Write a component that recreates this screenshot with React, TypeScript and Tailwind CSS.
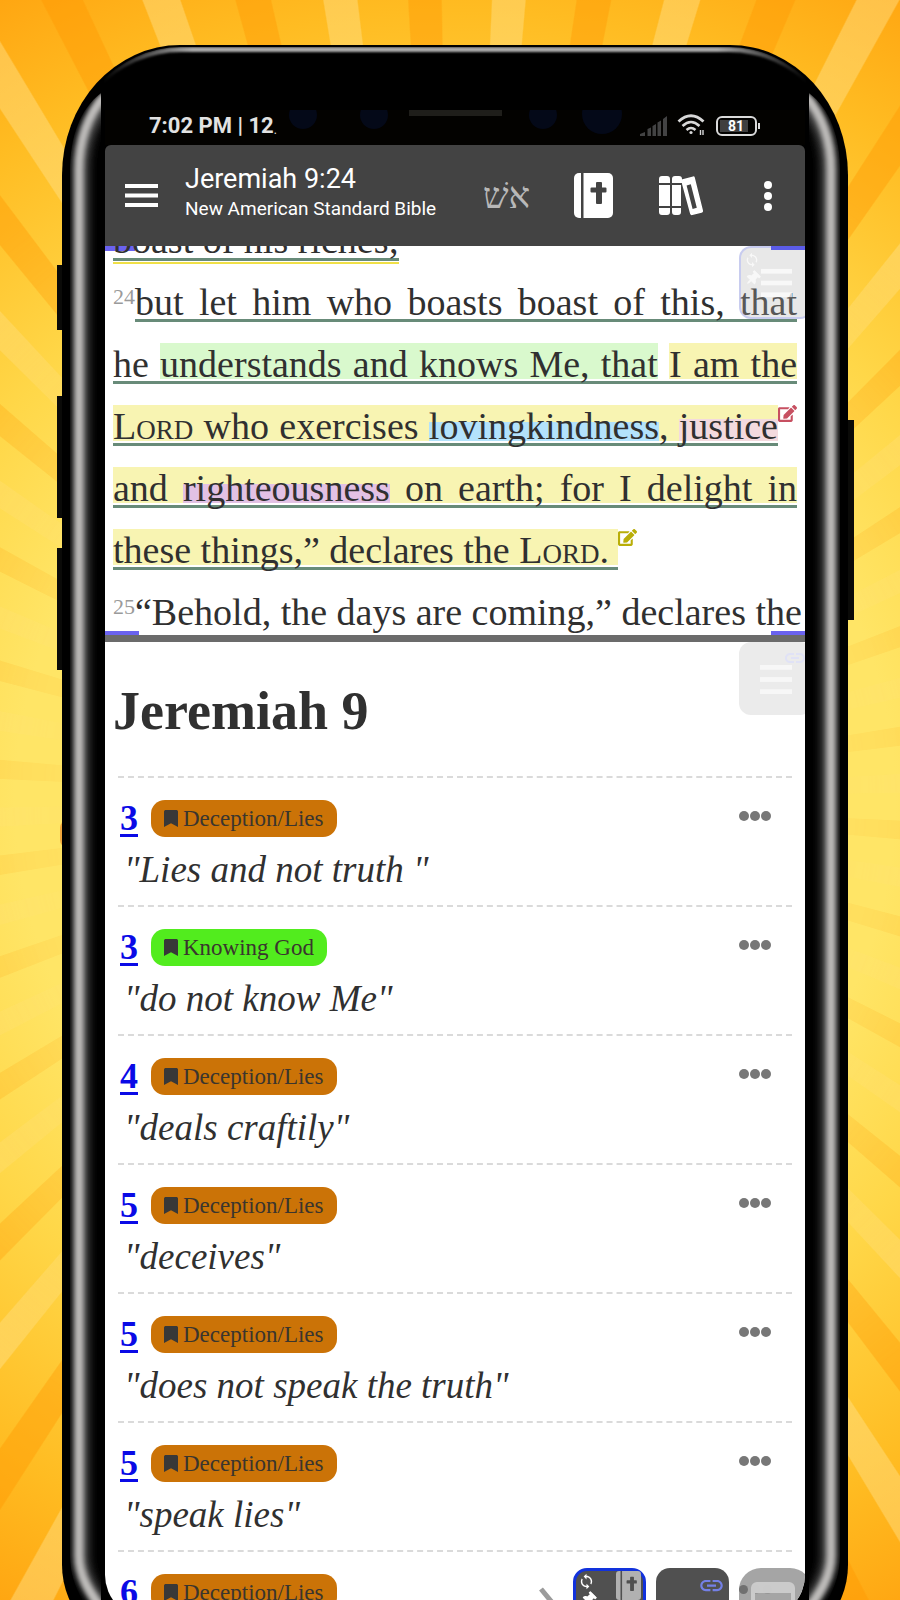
import React from "react";
import { FaBookmark, FaEdit, FaThumbtack } from "react-icons/fa";
import { MdLink, MdSync } from "react-icons/md";

const hl = {
  green:
    "bg-[linear-gradient(to_top,transparent_6px,#d9f9cd_6px)]",
  yellow:
    "bg-[linear-gradient(to_top,transparent_6px,#f8f4b2_6px)]",
  blue:
    "bg-[linear-gradient(to_top,transparent_6px,#b3e2fb_6px,#b3e2fb_25px,transparent_25px)]",
  purple:
    "bg-[linear-gradient(to_top,transparent_6px,#e2c1e4_6px,#e2c1e4_25px,transparent_25px)]",
  pink:
    "bg-[linear-gradient(to_top,transparent_6px,#f3dade_6px,#f3dade_28px,transparent_28px)]",
};

function Mark({ tone, children }: { tone: keyof typeof hl; children: React.ReactNode }) {
  return <mark className={`bg-transparent text-inherit ${hl[tone]}`}>{children}</mark>;
}

function Underlined({ children }: { children: React.ReactNode }) {
  return (
    <span className="bg-[linear-gradient(to_top,transparent_1px,#688b79_1px,#688b79_4px,transparent_4px)]">
      {children}
    </span>
  );
}

function Line({ justify = true, children }: { justify?: boolean; children: React.ReactNode }) {
  return (
    <span className={justify ? "block whitespace-nowrap [text-align-last:justify]" : "block whitespace-nowrap"}>
      {children}
    </span>
  );
}

function VerseNumber({ n }: { n: number }) {
  return <sup className="top-0 align-[11px] text-[22px] leading-none text-[#9a9a9a]">{n}</sup>;
}

function Lord() {
  return <span className="[font-variant:small-caps]">Lord</span>;
}

function NoteIcon({ tone }: { tone: "red" | "olive" }) {
  return (
    <FaEdit
      className={
        tone === "red"
          ? "inline-block size-[19px] align-[16px] text-[#c75061]"
          : "inline-block size-[19px] align-[16px] text-[#b9ae08]"
      }
    />
  );
}

function Bars({ className }: { className: string }) {
  return (
    <svg viewBox="0 0 33 30" className={className} fill="currentColor" aria-hidden="true">
      <rect width="33" height="5" y="0" />
      <rect width="33" height="5" y="12.5" />
      <rect width="33" height="5" y="25" />
    </svg>
  );
}

function BibleIcon({ className, cross }: { className: string; cross: string }) {
  return (
    <svg viewBox="0 0 39 45" className={className} fill="currentColor" aria-hidden="true">
      <path d="M5 0h2v45H5a5 5 0 0 1-5-5V5a5 5 0 0 1 5-5z" />
      <path d="M9.5 0H34a5 5 0 0 1 5 5v35a5 5 0 0 1-5 5H9.5z" />
      <path
        fill={cross}
        d="M23 9h4a1 1 0 0 1 1 1v4.500h3.500a1 1 0 0 1 1 1v3a1 1 0 0 1-1 1H28V30a1 1 0 0 1-1 1h-4a1 1 0 0 1-1-1V19.500h-4.500a1 1 0 0 1-1-1v-3a1 1 0 0 1 1-1H22V10a1 1 0 0 1 1-1z"
      />
    </svg>
  );
}

function BooksIcon() {
  return (
    <svg viewBox="0 0 44 40" className="h-10 w-11" fill="currentColor" aria-hidden="true">
      <path d="M0 7V3a3 3 0 0 1 3-3h5a3 3 0 0 1 3 3v4zM0 9h11v21H0zM0 32h11v4a3 3 0 0 1-3 3H3a3 3 0 0 1-3-3z" />
      <path d="M13 7V3a3 3 0 0 1 3-3h4a3 3 0 0 1 3 3v4zM13 9h9v21h-9zM13 32h9v4a3 3 0 0 1-3 3h-3a3 3 0 0 1-3-3z" />
      <path
        fillRule="evenodd"
        d="M22.500 3.600 34 .4a1.500 1.500 0 0 1 1.800 1L44 34.600a2 2 0 0 1-1.400 2.200l-9.200 2.300a2 2 0 0 1-2.300-1.400L23 8zM27.600 9.500l6 23.400 4.200-1.200L31.800 8.200z"
      />
    </svg>
  );
}

function Wifi() {
  return (
    <svg viewBox="0 0 29 23" className="h-[23px] w-[29px]" fill="none" stroke="#d8d8d8" aria-hidden="true">
      <path d="M1.500 7.500Q14 -4 26.500 7.500" strokeWidth="2.800" />
      <path d="M5.500 12Q14 4 22.500 12" strokeWidth="2.600" />
      <path d="M9.500 16Q14 12 18.500 16" strokeWidth="2.500" />
      <circle cx="14" cy="18.500" r="1.600" fill="#d8d8d8" stroke="none" />
      <path d="M23.500 16v5M26 16v5" strokeWidth="1.400" />
    </svg>
  );
}

function Signal() {
  return (
    <svg viewBox="0 0 27 20" className="h-5 w-[27px]" fill="#434343" aria-hidden="true">
      <path d="M0 20v-2l5-2v4zM7.500 20v-7l3.500-1.500V20zM12.500 20V10l3.500-2v12zM17.500 20V6.500L21 4.500V20zM23 20V3l4-3v20z" />
    </svg>
  );
}

function EdgeShine({ id, className }: { id: string; className: string }) {
  return (
    <svg viewBox="0 0 43 1606" width="43" height="1606" className={className} aria-hidden="true">
      <defs>
        <filter id={`${id}-wide`} x="-100%" width="300%">
          <feGaussianBlur stdDeviation="4 1" />
        </filter>
        <filter id={`${id}-core`} x="-100%" width="300%">
          <feGaussianBlur stdDeviation="2.600 1" />
        </filter>
        <clipPath id={`${id}-clip`}>
          <path d="M39 48C18 64 8 92 8 125V1510C8 1540 22 1560 39 1580z" />
        </clipPath>
      </defs>
      <g clipPath={`url(#${id}-clip)`} fill="none">
        <path
          d="M44 56C28 74 19 96 19 125V1510C19 1530 28 1545 44 1566"
          stroke="#4a4948"
          strokeWidth="16"
          filter={`url(#${id}-wide)`}
        />
        <path
          d="M43 50C26 70 17 96 17 125V1510C17 1530 26 1546 43 1568"
          stroke="#bfbdbb"
          strokeWidth="9"
          filter={`url(#${id}-core)`}
        />
      </g>
    </svg>
  );
}

type Entry = { verse: number; label: string; color: "orange" | "green"; quote: string };

const entries: Entry[] = [
  { verse: 3, label: "Deception/Lies", color: "orange", quote: "Lies and not truth " },
  { verse: 3, label: "Knowing God", color: "green", quote: "do not know Me" },
  { verse: 4, label: "Deception/Lies", color: "orange", quote: "deals craftily" },
  { verse: 5, label: "Deception/Lies", color: "orange", quote: "deceives" },
  { verse: 5, label: "Deception/Lies", color: "orange", quote: "does not speak the truth" },
  { verse: 5, label: "Deception/Lies", color: "orange", quote: "speak lies" },
  { verse: 6, label: "Deception/Lies", color: "orange", quote: "" },
];

function EntryRow({ entry }: { entry: Entry }) {
  return (
    <li className="h-[129px] border-t-2 border-dashed border-[#dadada] pt-[21px]">
      <div className="flex items-center pl-[2px] pr-[21px]">
        <a
          href="#verse"
          className="text-[36px] leading-[38px] font-bold text-[#0a0ae6] underline decoration-[3px] underline-offset-4"
        >
          {entry.verse}
        </a>
        <span
          className={`ml-[13px] flex h-[37px] items-center gap-[5px] rounded-[14px] px-[13px] text-[23px] leading-[37px] text-[#3a352e] ${
            entry.color === "orange" ? "bg-[#cb7307]" : "bg-[#52ec1e]"
          }`}
        >
          <FaBookmark className="h-[17px] w-[14px] text-[#383838]" preserveAspectRatio="none" />
          {entry.label}
        </span>
        <button type="button" aria-label="More" className="mb-1 ml-auto flex gap-px">
          <span className="size-[10px] rounded-full bg-[#777]" />
          <span className="size-[10px] rounded-full bg-[#777]" />
          <span className="size-[10px] rounded-full bg-[#777]" />
        </button>
      </div>
      <p className="mt-[12px] pl-[6px] text-[37px] leading-[42px] whitespace-pre italic">
        {entry.quote && `"${entry.quote}"`}
      </p>
    </li>
  );
}

function StatusBar() {
  return (
    <div className="relative flex h-[35px] items-center overflow-hidden bg-[#030200] pr-[45px] pb-1 pl-[44px] text-[#e2e2e2]">
      <span className="absolute top-[-9px] left-[184px] size-7 rounded-full bg-[#040918]" />
      <span className="absolute top-[-9px] left-[255px] size-7 rounded-full bg-[#040918]" />
      <span className="absolute top-[-9px] left-[424px] size-7 rounded-full bg-[#040918]" />
      <span className="absolute top-[-16px] left-[477px] size-10 rounded-full bg-[#040918]" />
      <span className="absolute top-0 left-[304px] h-[6px] w-[93px] bg-[#1f1e1a]" />
      <span className="text-[22px] leading-[31px] font-bold">7:02 PM | 12</span>
      <span className="pt-2 text-[12px]">.</span>
      <span className="ml-auto flex items-center gap-[10px]">
        <Signal />
        <Wifi />
        <span className="flex items-center gap-px">
          <span className="flex h-5 w-[41px] items-center rounded-md border-2 border-[#dadada] p-[2px]">
            <span className="flex h-full w-[28px] items-center justify-center bg-[#3f3f3f] pl-[4px] text-[14px] leading-none font-bold text-white">
              81
            </span>
          </span>
          <span className="h-[6px] w-[2px] bg-[#dadada]" />
        </span>
      </span>
    </div>
  );
}

function Header() {
  return (
    <header className="flex h-[101px] items-center rounded-t-md bg-[#434343] pr-[33px] pl-[20px] text-white">
      <button type="button" aria-label="Menu">
        <svg viewBox="0 0 33 23" className="h-[23px] w-[33px]" fill="currentColor" aria-hidden="true">
          <path d="M0 0h33v4H0zM0 9.500h33v4H0zM0 19h33v4H0z" />
        </svg>
      </button>
      <div className="mb-[6px] ml-[27px]">
        <h1 className="text-[27px] leading-[32px]">Jeremiah 9:24</h1>
        <p className="text-[19px] leading-[28px]">New American Standard Bible</p>
      </div>
      <div className="ml-auto flex items-center">
        <button
          type="button"
          aria-label="Original language"
          dir="rtl"
          className="font-['Liberation_Serif',serif] text-[36px] leading-[44px] text-[#b8b8b8]"
        >
          אשׁ
        </button>
        <button type="button" aria-label="Bible" className="ml-[44px]">
          <BibleIcon className="h-[45px] w-[39px]" cross="#434343" />
        </button>
        <button type="button" aria-label="Library" className="ml-[46px]">
          <BooksIcon />
        </button>
        <button type="button" aria-label="More options" className="ml-[61px]">
          <svg viewBox="0 0 8 30" className="h-[30px] w-2" fill="currentColor" aria-hidden="true">
            <circle cx="4" cy="4" r="4" />
            <circle cx="4" cy="15" r="4" />
            <circle cx="4" cy="26" r="4" />
          </svg>
        </button>
      </div>
    </header>
  );
}

function BiblePane() {
  return (
    <section className="relative h-[389px] shrink-0 overflow-hidden px-2 font-['Liberation_Serif',serif] text-[38px] leading-[62px] text-[#303030]">
      <span className="absolute top-0 left-0 h-[5px] w-[30px] bg-[#6a62f0]" />
      <span className="absolute bottom-0 left-0 h-1 w-[34px] bg-[#6a62f0]" />
      <p className="relative mt-[-37px]">
        <Line justify={false}>
          <span className="border-b-2 border-[#f0e047] pb-px bg-[linear-gradient(to_top,transparent_1px,#688b79_1px,#688b79_4px,transparent_4px)]">
            boast of his riches;
          </span>
        </Line>
        <Line>
          <VerseNumber n={24} />
          <Underlined>but let him who boasts boast of this, that</Underlined>
        </Line>
        <Line>
          <Underlined>
            he <Mark tone="green">understands and knows Me, that</Mark> <Mark tone="yellow">I am the</Mark>
          </Underlined>
        </Line>
        <Line>
          <Underlined>
            <Mark tone="yellow">
              <Lord /> who exercises <Mark tone="blue">lovingkindness</Mark>, <Mark tone="pink">justice</Mark>
            </Mark>
          </Underlined>
          <NoteIcon tone="red" />
        </Line>
        <Line>
          <Underlined>
            <Mark tone="yellow">
              and <Mark tone="purple">righteousness</Mark> on earth; for I delight in
            </Mark>
          </Underlined>
        </Line>
        <Line justify={false}>
          <Underlined>
            <Mark tone="yellow">
              these things,” declares the <Lord />.{" "}
            </Mark>
          </Underlined>
          <NoteIcon tone="olive" />
        </Line>
        <Line>
          <VerseNumber n={25} />
          “Behold, the days are coming,” declares the
        </Line>
      </p>
      <button
        type="button"
        aria-label="Window menu"
        className="absolute top-0 right-[-7px] h-[73px] w-[73px] rounded-xl border-2 border-[#7d8cff]/30 bg-[#b4b4b4]/30 text-white/70"
      >
        <MdSync className="absolute top-[4px] left-[3px] size-4" />
        <FaThumbtack className="absolute top-[23px] left-[4px] size-[15px] rotate-45" />
        <Bars className="absolute top-[20px] left-[20px] h-[30px] w-[31px]" />
      </button>
      <span className="absolute top-0 right-0 h-1 w-[34px] bg-[#5b5ce8]" />
      <span className="absolute right-0 bottom-0 h-1 w-[34px] bg-[#6a62f0]" />
    </section>
  );
}

function NotesPane() {
  return (
    <section className="relative flex-1 overflow-hidden font-['Liberation_Serif',serif] text-[#303030]">
      <h2 className="px-2 pt-[39px] pb-[35px] text-[54px] leading-[60px] font-bold">Jeremiah 9</h2>
      <ul className="mr-[13px] ml-[13px]">
        {entries.map((entry, i) => (
          <EntryRow key={i} entry={entry} />
        ))}
      </ul>
      <button
        type="button"
        aria-label="Window menu"
        className="absolute top-0 right-[-7px] h-[73px] w-[73px] rounded-xl bg-[#ebebeb] text-[#f7f7f7]"
      >
        <MdLink className="absolute top-[4px] left-[44px] size-[24px] text-[#e0e2f6]" />
        <Bars className="absolute top-[22px] left-[21px] h-[31px] w-[32px]" />
      </button>
    </section>
  );
}

function BottomTools() {
  return (
    <div className="absolute right-[-7px] bottom-[-23px] flex items-start gap-[10px]">
      <svg viewBox="0 0 28 52" className="mt-[18px] mr-[-3px] h-[52px] w-7" aria-hidden="true">
        <path d="M3 3 22 26 3 49" fill="none" stroke="#9b9b9b" strokeWidth="5" />
      </svg>
      <button
        type="button"
        aria-label="Bible window"
        className="relative h-[73px] w-[73px] rounded-[14px] border-[3px] border-[#1232dc] bg-[#505050] text-white"
      >
        <MdSync className="absolute top-[2px] left-[2px] size-[17px]" />
        <FaThumbtack className="absolute top-[21px] left-[5px] size-[15px] rotate-45" />
        <BibleIcon className="absolute top-0 right-[2px] h-[29px] w-[25px] text-[#b1b1b1]" cross="#505050" />
      </button>
      <button
        type="button"
        aria-label="Linked window"
        className="relative h-[73px] w-[73px] rounded-[14px] bg-[#505050] text-[#7480e6]"
      >
        <MdLink className="absolute top-[4px] left-[42px] size-[27px]" />
      </button>
      <button
        type="button"
        aria-label="Restore window"
        className="relative h-[73px] w-[73px] rounded-[22px] bg-[#a5a5a5]"
      >
        <span className="absolute top-[17px] left-0 flex gap-[3px]">
          <span className="size-[9px] rounded-full bg-[#707070]" />
          <span className="size-[9px] rounded-full bg-[#979797]" />
          <span className="size-[9px] rounded-full bg-[#979797]" />
        </span>
        <span className="absolute top-[14px] left-[12px] h-[44px] w-[44px] rounded-md border-x-4 border-t-[11px] border-b-4 border-[#cfcfcf] opacity-90" />
      </button>
    </div>
  );
}

export default function App() {
  return (
    <div className="relative h-screen overflow-hidden bg-[radial-gradient(circle_at_455px_50%,#ffe566_440px,#ffd748_590px,#ffbc22_790px,#ffa30f_940px)] font-[Roboto,sans-serif]">
      <div className="absolute inset-0 bg-[repeating-conic-gradient(from_-2.2deg_at_455px_50%,rgb(255_150_0/0.4)_0_1.2deg,transparent_1.3deg_4.8deg,rgb(255_226_140/0.45)_4.9deg_7.2deg,transparent_7.3deg_10.8deg,rgb(255_150_0/0.4)_10.9deg_12deg)] [mask-image:radial-gradient(circle_at_455px_50%,rgb(0_0_0/0.15)_400px,rgb(0_0_0/0.5)_560px,black_720px)]" />
      <div className="relative mt-[45px] mr-[52px] ml-[62px] h-[calc(100vh+5px)]">
        <span className="absolute top-[775px] left-[-2px] h-7 w-2 rounded-l-full bg-[#f0a63c]" />
        <span className="absolute top-[220px] left-[-5px] h-[65px] w-[6px] bg-[#0a0a08]" />
        <span className="absolute top-[351px] left-[-5px] h-[122px] w-[6px] bg-[#0a0a08]" />
        <span className="absolute top-[503px] left-[-5px] h-[122px] w-[6px] bg-[#0a0a08]" />
        <span className="absolute top-[375px] right-[-6px] h-[200px] w-[7px] bg-[#0a0a08]" />
        <div className="relative flex h-full flex-col overflow-hidden rounded-t-[118px_130px] rounded-b-[85px] bg-black px-[43px] pt-[65px] pb-8">
          <span className="absolute inset-x-px top-[2px] h-[200px] rounded-t-[118px_130px] border-t-[5px] border-[#a9a9a9] blur-[1px] [mask-image:linear-gradient(to_right,transparent_40px,black_130px,black_calc(100%-130px),transparent_calc(100%-40px))]" />
          <EdgeShine id="left" className="absolute top-0 left-0" />
          <EdgeShine id="right" className="absolute top-0 right-0 -scale-x-100" />
          <StatusBar />
          <main className="relative flex min-h-0 flex-1 flex-col overflow-hidden rounded-b-[43px] bg-[linear-gradient(#000_50px,#fff_50px)]">
            <Header />
            <BiblePane />
            <div className="h-[7px] shrink-0 bg-[#6b6b6b]" />
            <NotesPane />
            <BottomTools />
          </main>
        </div>
      </div>
    </div>
  );
}
